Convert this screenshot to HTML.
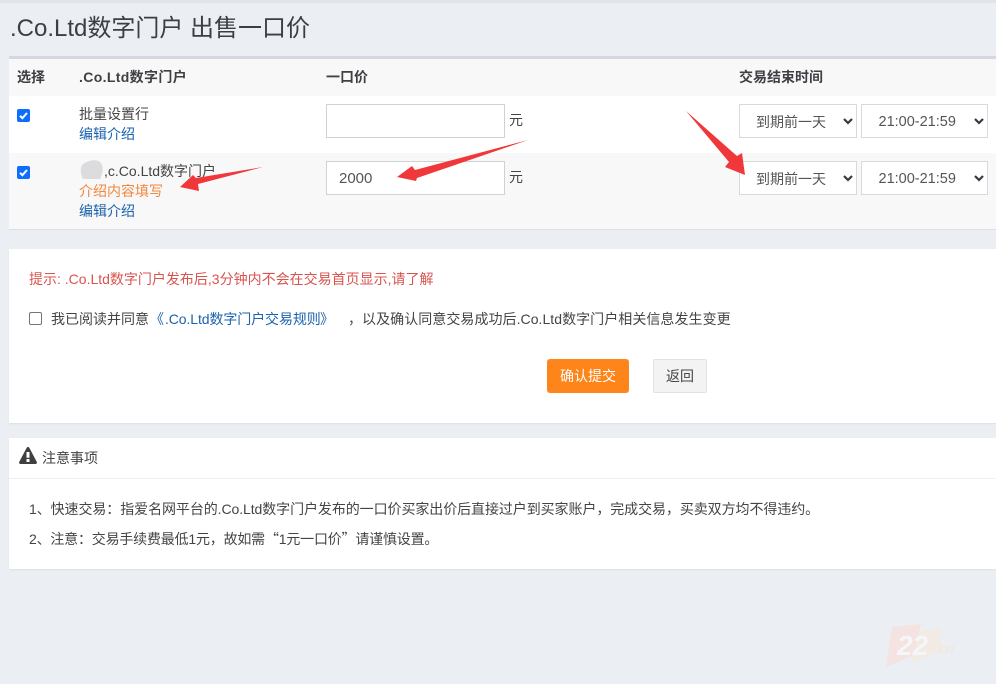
<!DOCTYPE html>
<html lang="zh">
<head>
<meta charset="utf-8">
<style>
html,body{margin:0;padding:0}
body{width:996px;height:684px;position:relative;overflow:hidden;background:#ebeef3;font-family:"Liberation Sans","Noto Sans CJK SC",sans-serif;font-size:14px;color:#444}
.a{position:absolute;white-space:nowrap;line-height:20px}
.b{position:absolute}
.inp{position:absolute;box-sizing:border-box;border:1px solid #ced1d6;background:#fff;height:34px;line-height:34px;color:#555;font-size:15px}
.sel{position:absolute;box-sizing:border-box;border:1px solid #d6d9de;background:#fff;height:34px;line-height:34px;color:#555;font-size:14px;padding-left:16px}
.sel.t{font-size:14.5px;padding-left:16.5px}
.sel svg{position:absolute;right:2px;top:12px}
.cb{position:absolute;width:13px;height:13px;background:#0d6efd;border-radius:2px}
.link{color:#1a62ad}
.cjk{font-family:"Noto Sans CJK SC",sans-serif}
.th{font-weight:bold;top:67px;color:#3f3f44}
</style>
</head>
<body>
<div class="b" style="left:0;top:0;width:996px;height:3px;background:#e2e4e8"></div>
<div class="a" style="left:10px;top:13px;font-size:24px;line-height:32px;color:#3a3f45">.Co.Ltd数字门户 出售一口价</div>

<div class="b" style="left:9px;top:56px;width:987px;height:3px;background:#d5d8e0"></div>
<div class="b" style="left:9px;top:59px;width:987px;height:37px;background:#f8f8f9"></div>
<div class="b" style="left:9px;top:96px;width:987px;height:57px;background:#fff"></div>
<div class="b" style="left:9px;top:153px;width:987px;height:76px;background:#f8f8f9"></div>
<div class="b" style="left:9px;top:229px;width:987px;height:1px;background:#dcdfe3"></div>

<div class="a th" style="left:17px">选择</div>
<div class="a th" style="left:79px;letter-spacing:.35px">.Co.Ltd数字门户</div>
<div class="a th" style="left:326px">一口价</div>
<div class="a th" style="left:739px">交易结束时间</div>

<div class="cb" style="left:17px;top:109px"><svg width="13" height="13" viewBox="0 0 13 13" style="display:block"><path d="M3 6.8 5.4 9.2 10 4" fill="none" stroke="#fff" stroke-width="2"/></svg></div>
<div class="a" style="left:79px;top:104px">批量设置行</div>
<div class="a link" style="left:79px;top:124px">编辑介绍</div>
<div class="inp" style="left:326px;top:104px;width:179px"></div>
<div class="a" style="left:509px;top:110px">元</div>
<div class="sel" style="left:739px;top:104px;width:118px">到期前一天<svg width="12" height="8" viewBox="0 0 12 8"><path d="M2 2 6 6 10 2" fill="none" stroke="#343a40" stroke-width="2.2"/></svg></div>
<div class="sel t" style="left:861px;top:104px;width:127px">21:00-21:59<svg width="12" height="8" viewBox="0 0 12 8"><path d="M2 2 6 6 10 2" fill="none" stroke="#343a40" stroke-width="2.2"/></svg></div>

<div class="cb" style="left:17px;top:166px"><svg width="13" height="13" viewBox="0 0 13 13" style="display:block"><path d="M3 6.8 5.4 9.2 10 4" fill="none" stroke="#fff" stroke-width="2"/></svg></div>
<div class="a" style="left:80px;top:161px"><span style="margin-left:24px">,c.Co.Ltd数字门户</span></div>
<svg class="b" style="left:80px;top:159px" width="24" height="22" viewBox="0 0 24 22"><path d="M1 9 C2 4 6 3 11 1.500 C16 0.500 21 2 22 6 C23.500 11 22 16 20 20 L3 20 C1 16 0.500 12 1 9Z" fill="#dcdcde"/></svg>
<div class="a" style="left:79px;top:181px;color:#f0883e">介绍内容填写</div>
<div class="a link" style="left:79px;top:201px">编辑介绍</div>
<div class="inp" style="left:326px;top:161px;width:179px;padding-left:12px">2000</div>
<div class="a" style="left:509px;top:167px">元</div>
<div class="sel" style="left:739px;top:161px;width:118px">到期前一天<svg width="12" height="8" viewBox="0 0 12 8"><path d="M2 2 6 6 10 2" fill="none" stroke="#343a40" stroke-width="2.2"/></svg></div>
<div class="sel t" style="left:861px;top:161px;width:127px">21:00-21:59<svg width="12" height="8" viewBox="0 0 12 8"><path d="M2 2 6 6 10 2" fill="none" stroke="#343a40" stroke-width="2.2"/></svg></div>

<div class="b" style="left:9px;top:249px;width:987px;height:174px;background:#fff;box-shadow:0 1px 1px #dde0e5"></div>
<div class="a" style="left:29px;top:269px;color:#d9534f">提示: .Co.Ltd数字门户发布后,3分钟内不会在交易首页显示,请了解</div>
<div class="b" style="left:29px;top:312px;width:11px;height:11px;border:1px solid #767676;border-radius:2px;background:#fff"></div>
<div class="a" style="left:51px;top:309px">我已阅读并同意</div>
<div class="a link" style="left:150px;top:309px">《</div>
<div class="a link" style="left:165px;top:309px;letter-spacing:-.1px">.Co.Ltd数字门户交易规则</div>
<div class="a link" style="left:320px;top:309px">》</div>
<div class="a" style="left:348px;top:309px;letter-spacing:.05px">，以及确认同意交易成功后.Co.Ltd数字门户相关信息发生变更</div>
<div class="b" style="left:547px;top:359px;width:82px;height:34px;background:#fd851a;border-radius:3px;color:#fff;text-align:center;line-height:34px;font-size:14px">确认提交</div>
<div class="b" style="left:653px;top:359px;width:52px;height:32px;border:1px solid #e2e2e4;background:#f3f3f4;border-radius:2px;color:#444;text-align:center;line-height:33px;font-size:14px">返回</div>

<div class="b" style="left:9px;top:438px;width:987px;height:131px;background:#fff;box-shadow:0 1px 1px #dde0e5"></div>
<div class="b" style="left:9px;top:478px;width:987px;height:1px;background:#eff0f2"></div>
<svg class="b" style="left:19px;top:447px" width="18" height="17" viewBox="0 0 18 17"><path d="M9 0 C9.6 0 10 .3 10.3 .8 L17.7 14.8 C18.2 15.8 17.7 17 16.5 17 L1.5 17 C.3 17 -.2 15.8 .3 14.8 L7.7 .8 C8 .3 8.4 0 9 0Z" fill="#3f3f3f"/><path d="M7.5 5H10.5V10.8H7.5ZM7.5 12H10.5V15H7.5Z" fill="#fff"/></svg>
<div class="a" style="left:42px;top:448px">注意事项</div>
<div class="a" style="left:29px;top:499px;letter-spacing:-.08px">1、快速交易：指爱名网平台的.Co.Ltd数字门户发布的一口价买家出价后直接过户到买家账户，完成交易，买卖双方均不得违约。</div>
<div class="a" style="left:29px;top:529px;letter-spacing:-.2px">2、注意：交易手续费最低1元，故如需<span class="cjk">“</span>1元一口价<span class="cjk">”</span>请谨慎设置。</div>

<svg class="b" style="left:0;top:0" width="996" height="684" viewBox="0 0 996 684">
<path d="M263 167 L198 184 L199 191 L180 187 L193 175 L196 178Z" fill="#f0383a"/>
<path d="M528 140 L417 178 L416 181 L397 177 L412 166 L415 170Z" fill="#f0383a"/>
<path d="M686 111 L737 156 L742 153 L745 175 L725 167 L729 162Z" fill="#f0383a"/>
<path d="M892 627 L921 624 L914 655 L886 667Z" fill="#f4e3e1"/>
<path d="M921 630 L940 629 L942 650 L912 663 L914 655Z" fill="#f1ebe3"/>
<text x="897" y="655" font-family="Liberation Sans" font-size="28" font-weight="bold" font-style="italic" fill="#f5f6f9">22</text>
<text x="936" y="654" font-family="Liberation Sans" font-size="16" font-weight="bold" font-style="italic" fill="#efe9df">xn</text>
</svg>
</body>
</html>
